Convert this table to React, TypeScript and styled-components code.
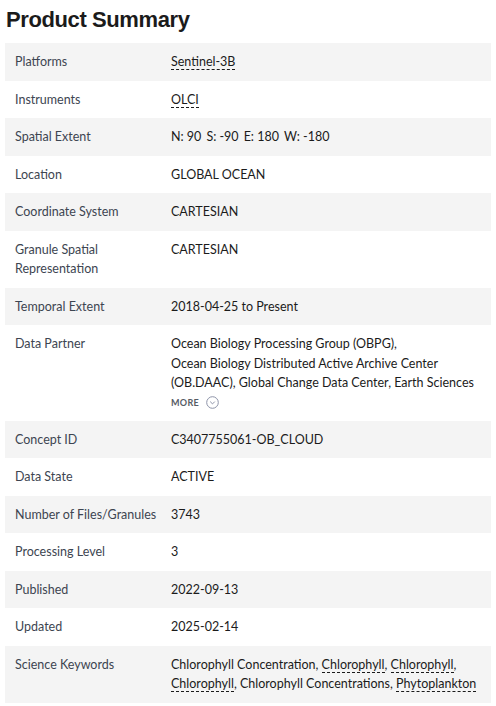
import React from "react";
import styled, { createGlobalStyle } from "styled-components";

const Global = createGlobalStyle`
  html, body { margin: 0; padding: 0; background: #fff; }
  body { font-family: "Lato", "Liberation Sans", sans-serif; }
`;

const Page = styled.div`
  padding: 0 5px;
`;

const Title = styled.h2`
  margin: 0;
  padding: 6px 1px 0;
  height: 43px;
  box-sizing: border-box;
  font-family: "Liberation Sans", Arial, sans-serif;
  font-weight: 700;
  font-size: 22px;
  line-height: 28px;
  color: #1b1b1b;
  letter-spacing: -0.4px;
`;

const Table = styled.dl`
  margin: 0;
  display: grid;
  grid-template-columns: 156px 1fr;
  font-size: 12.5px;
  line-height: 19.5px;
`;

const Row = styled.div<{ $shade: boolean }>`
  display: contents;
  & > * { background: ${(p) => (p.$shade ? "#f4f4f4" : "#fff")}; }
`;

const Label = styled.dt`
  margin: 0;
  padding: 9px 10px;
  color: #3d4551;
  white-space: nowrap;
`;

const Value = styled.dd`
  margin: 0;
  padding: 9px 10px;
  color: #1b1b1b;
`;

const Link = styled.span`
  border-bottom: 1px dashed #1b1b1b;
`;

const Gap = styled.span`
  margin-right: 5px;
`;

const More = styled.div`
  display: flex;
  align-items: center;
  gap: 7px;
  margin-top: 1px;
  font-size: 9px;
  font-weight: 700;
  color: #565c65;
  letter-spacing: 0.3px;
  height: 18px;
`;

const Rows: { label: React.ReactNode; value: React.ReactNode }[] = [
  { label: "Platforms", value: <Link>Sentinel-3B</Link> },
  { label: "Instruments", value: <Link>OLCI</Link> },
  {
    label: "Spatial Extent",
    value: (
      <>
        <Gap>N: 90</Gap><Gap>S: -90</Gap><Gap>E: 180</Gap>W: -180
      </>
    ),
  },
  { label: "Location", value: "GLOBAL OCEAN" },
  { label: "Coordinate System", value: "CARTESIAN" },
  { label: <>Granule Spatial<br />Representation</>, value: "CARTESIAN" },
  { label: "Temporal Extent", value: "2018-04-25 to Present" },
  {
    label: "Data Partner",
    value: (
      <>
        Ocean Biology Processing Group (OBPG),
        <br />
        Ocean Biology Distributed Active Archive Center
        <br />
        (OB.DAAC), Global Change Data Center, Earth Sciences
        <More>
          MORE
          <svg width="13" height="13" viewBox="0 0 13 13" fill="none">
            <circle cx="6.5" cy="6.5" r="5.8" stroke="#8d93a8" strokeWidth="1" />
            <path d="M4.2 5.6 L6.5 7.9 L8.8 5.6" stroke="#8d93a8" strokeWidth="1" />
          </svg>
        </More>
      </>
    ),
  },
  { label: "Concept ID", value: "C3407755061-OB_CLOUD" },
  { label: "Data State", value: "ACTIVE" },
  { label: "Number of Files/Granules", value: "3743" },
  { label: "Processing Level", value: "3" },
  { label: "Published", value: "2022-09-13" },
  { label: "Updated", value: "2025-02-14" },
  {
    label: "Science Keywords",
    value: (
      <>
        Chlorophyll Concentration, <Link>Chlorophyll</Link>, <Link>Chlorophyll</Link>,
        <br />
        <Link>Chlorophyll</Link>, Chlorophyll Concentrations, <Link>Phytoplankton</Link>
      </>
    ),
  },
];

export default function App() {
  return (
    <Page>
      <Global />
      <Title>Product Summary</Title>
      <Table>
        {Rows.map((r, i) => (
          <Row key={i} $shade={i % 2 === 0}>
            <Label>{r.label}</Label>
            <Value>{r.value}</Value>
          </Row>
        ))}
      </Table>
    </Page>
  );
}
